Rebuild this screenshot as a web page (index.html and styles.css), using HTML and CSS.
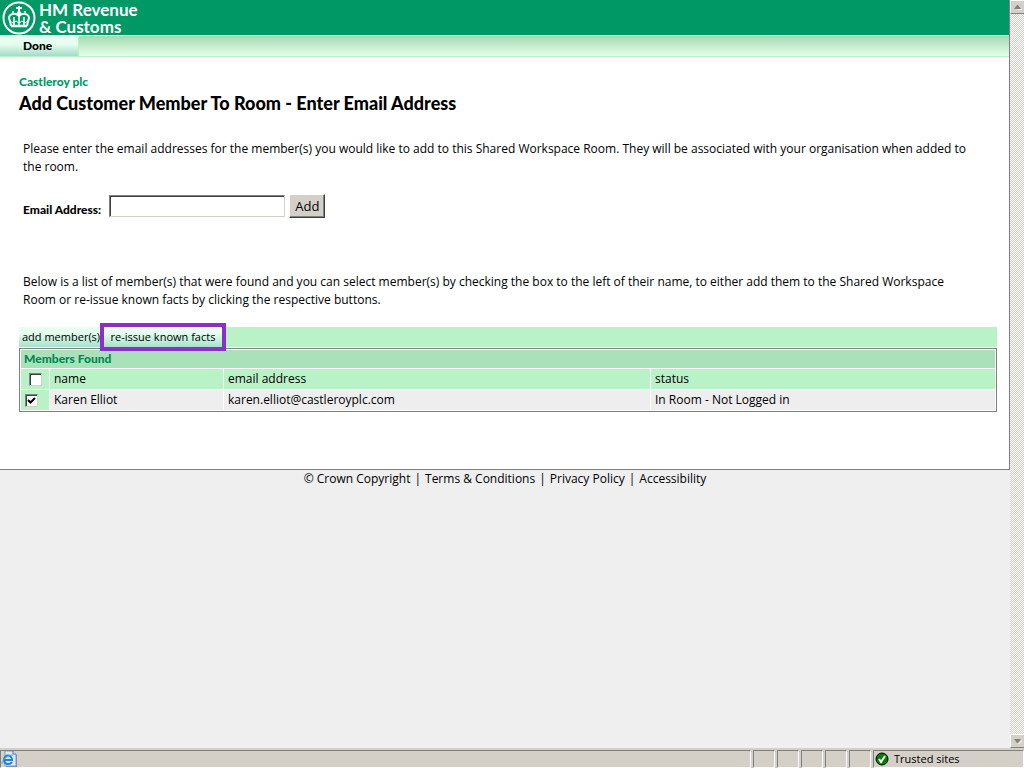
FILE: index.html
```html
<!DOCTYPE html>
<html lang="en">
<head>
  <meta charset="UTF-8" />
  <title>Add Customer Member To Room</title>
  <link rel="stylesheet" href="styles.css">
</head>
<body>
  <div class="viewport">
    <div class="page">
      <div class="panel">
        <header class="banner">
          <svg class="crest" width="34" height="34" viewBox="0 0 34 34" fill="none" stroke="#fff">
            <circle cx="17" cy="17" r="15.5" stroke-width="2" />
            <path d="M9 25 L8 20 C4 13 13 11 17 15 C21 11 30 13 26 20 L25 25" stroke-width="2" />
            <path d="M17 14 V24 M12 16 V24 M22 16 V24" stroke-width="1.5" />
            <path d="M8 20 L11 22 L14 20 L17 22 L20 20 L23 22 L26 20" />
            <path d="M9 25 H25" stroke-width="2.5" />
            <path d="M17 5 V11 M14 7 H20" stroke-width="2" />
            <circle cx="17" cy="12" r="2" fill="#fff" stroke="none" />
            <circle cx="11" cy="11" r="1" fill="#fff" stroke="none" />
            <circle cx="23" cy="11" r="1" fill="#fff" stroke="none" />
          </svg>
          <div class="brand"><div>HM Revenue</div><div>&amp; Customs</div></div>
        </header>
        <nav class="topnav">
          <a href="#" class="done">Done</a>
        </nav>

        <main class="content">
          <div class="company">Castleroy plc</div>
          <h1>Add Customer Member To Room - Enter Email Address</h1>
          <p class="intro">Please enter the email addresses for the member(s) you would like to add to this Shared Workspace Room. They will be associated with your organisation when added to the room.</p>

          <form class="email-form">
            <label for="email">Email Address:</label>
            <input type="text" id="email" name="email" />
            <button type="button" class="add-btn">Add</button>
          </form>

          <p class="help">Below is a list of member(s) that were found and you can select member(s) by checking the box to the left of their name, to either add them to the Shared Workspace Room or re-issue known facts by clicking the respective buttons.</p>

          <div class="toolbar">
            <button type="button" class="tool">add member(s)</button>
            <button type="button" class="tool selected">re-issue known facts</button>
          </div>
          <table class="members">
            <colgroup>
              <col class="col-check">
              <col class="col-name">
              <col class="col-email">
              <col>
            </colgroup>
            <thead>
              <tr class="title-row"><th colspan="4">Members Found</th></tr>
              <tr class="head-row">
                <th class="check center"><input type="checkbox" aria-label="Select all members" /></th>
                <th>name</th>
                <th>email address</th>
                <th>status</th>
              </tr>
            </thead>
            <tbody>
              <tr>
                <td class="check"><input type="checkbox" aria-label="Select Karen Elliot" checked /></td>
                <td>Karen Elliot</td>
                <td>karen.elliot@castleroyplc.com</td>
                <td>In Room - Not Logged in</td>
              </tr>
            </tbody>
          </table>
        </main>
      </div>

      <footer class="footer">
        <span>© Crown Copyright</span>
        <span>|</span>
        <a href="#">Terms &amp; Conditions</a>
        <span>|</span>
        <a href="#">Privacy Policy</a>
        <span>|</span>
        <a href="#">Accessibility</a>
      </footer>
    </div>

    <div class="scrollbar">
      <button type="button" class="arrow" aria-label="Scroll up">
        <svg width="8" height="5" viewBox="0 0 8 5"><path d="M1 5 H8 V4 Z" fill="#fff" /><path d="M0 4 L3 0 H4 L7 4 Z" fill="#808080" /></svg>
      </button>
      <button type="button" class="arrow" aria-label="Scroll down">
        <svg width="8" height="5" viewBox="0 0 8 5"><path d="M8 1 L4 5 L5 5 L8 2 Z" fill="#fff" /><path d="M0 0 H7 L4 4 H3 Z" fill="#808080" /></svg>
      </button>
    </div>
  </div>

  <div class="statusbar">
    <div class="pane main-pane">
      <svg width="17" height="16" viewBox="0 0 17 16">
        <path d="M5 1 H13 L16 4 V16 H5 Z" fill="#8580a0" />
        <path d="M4 0 H12 L15 3 V15 H4 Z" fill="#dce9fb" stroke="#7b9bd0" />
        <path d="M12 0 V3 H15" fill="#fff" stroke="#5068a8" />
        <path d="M3 9 H11 C11 3 3 3 3 9 C3 14 9 14 11 11" fill="none" stroke="#2380d8" stroke-width="2" />
        <path d="M1 13 C0 10 6 4 12 4" fill="none" stroke="#4aacec" />
      </svg>
    </div>
    <div class="pane"></div>
    <div class="pane"></div>
    <div class="pane"></div>
    <div class="pane"></div>
    <div class="pane"></div>
    <div class="pane zone">
      <svg width="14" height="14" viewBox="0 0 14 14">
        <circle cx="7" cy="7" r="6" fill="#008000" stroke="#000" />
        <path d="M4 7 L6 10 L10 4" fill="none" stroke="#fff" stroke-width="2" />
      </svg>
      <span>Trusted sites</span>
    </div>
  </div>
</body>
</html>
```
FILE: styles.css
```css
* {
  box-sizing: border-box;
}
body {
  margin: 0;
  height: 100vh;
  display: flex;
  flex-direction: column;
  font-family: 'Open Sans', sans-serif;
  font-size: 12px;
  line-height: 18px;
  color: #000;
  background-color: #efefef;
}
a {
  color: inherit;
  text-decoration: none;
}
button,
input {
  margin: 0;
  font-family: inherit;
  color: inherit;
}
.viewport {
  flex: 1;
  display: flex;
  min-height: 0;
}
.page {
  flex: 1;
  overflow: hidden;
}
.panel {
  background-color: #fff;
  border-right: 1px solid #808080;
  border-bottom: 1px solid #808080;
}

/* header */
.banner {
  display: flex;
  align-items: center;
  gap: 3px;
  height: 35px;
  padding-left: 2px;
  background-color: #009966;
}
.brand {
  color: #fff;
  font-family: 'Lato', sans-serif;
  font-size: 17px;
  font-weight: 700;
  line-height: 17px;
}
.topnav {
  display: flex;
  height: 22px;
  border-top: 1px solid #fff;
  border-bottom: 1px solid #baf2c8;
  background: linear-gradient(#a3dab0, #e6ffea);
}
.done {
  width: 79px;
  padding-left: 23px;
  font-family: 'Lato', sans-serif;
  font-weight: 900;
  line-height: 20px;
  border-right: 1px solid #baf2c8;
  background: linear-gradient(#e6fff0 40%, #a3dcc8);
}

/* content */
.content {
  padding: 16px 12px 57px 19px;
}
.company {
  font-family: 'Lato', sans-serif;
  font-weight: 900;
  color: #009966;
}
h1 {
  margin: 0 0 25px;
  font-family: 'Lato', sans-serif;
  font-size: 18px;
  line-height: 24px;
  font-weight: 900;
}
.intro,
.help {
  margin: 0;
  padding: 0 20px 0 4px;
}
.email-form {
  display: flex;
  align-items: center;
  padding: 17px 4px 54px;
}
.email-form label {
  padding-top: 8px;
  font-family: 'Lato', sans-serif;
  font-weight: 900;
}
.email-form input {
  width: 176px;
  height: 22px;
  margin: 0 4px 0 8px;
  padding: 1px 3px;
  background-color: #fff;
  border: 1px solid #808080;
  border-right-color: #d4d0c8;
  border-bottom-color: #d4d0c8;
  box-shadow: inset 1px 1px #404040;
}
.add-btn {
  height: 24px;
  padding: 0 5px;
  font-size: 13px;
  background-color: #d4d0c8;
  border: 1px solid #fff;
  border-right-color: #404040;
  border-bottom-color: #404040;
  box-shadow: inset -1px -1px #808080;
}

/* member list */
.toolbar {
  display: flex;
  gap: 4px;
  height: 20px;
  margin: 18px 0 1px;
  background-color: #baf2c8;
}
.tool {
  width: 81px;
  padding: 0 0 2px 3px;
  font-size: 11px;
  white-space: nowrap;
  border: none;
  background: linear-gradient(#e6fff0 30%, #a8e0cc);
}
.tool.selected {
  width: 118px;
  padding-left: 0;
  outline: 4px solid #8b2fc9;
}
.members {
  width: 100%;
  table-layout: fixed;
  border: 1px solid #808080;
  border-collapse: separate;
  border-spacing: 1px;
  background-color: #fff;
}
.col-check {
  width: 28px;
}
.col-name {
  width: 173px;
}
.col-email {
  width: 426px;
}
.members th,
.members td {
  height: 20px;
  padding: 0 4px;
  text-align: left;
  font-weight: 400;
  line-height: 18px;
  background-color: #eee;
}
.members .title-row th {
  height: 18px;
  padding: 0 3px;
  font-family: 'Lato', sans-serif;
  font-weight: 900;
  color: #008855;
  background-color: #a9e2b8;
}
.members .head-row th,
.members .check {
  background-color: #baf2c8;
}
.members .center {
  text-align: center;
}
.members input {
  appearance: none;
  display: inline-block;
  width: 13px;
  height: 13px;
  vertical-align: middle;
  background-color: #fff;
  border: 1px solid #808080;
  border-right-color: #d4d0c8;
  border-bottom-color: #d4d0c8;
  box-shadow: inset 1px 1px #404040;
}
.members input:checked {
  background-image: url("data:image/svg+xml,%3Csvg xmlns='http://www.w3.org/2000/svg' viewBox='0 0 11 11'%3E%3Cpath d='M2 5 L4.5 7.500 L9 3' fill='none' stroke='black' stroke-width='2'/%3E%3C/svg%3E");
}
.footer {
  display: flex;
  justify-content: center;
  gap: 4px;
}

/* browser chrome */
.scrollbar {
  display: flex;
  flex-direction: column;
  justify-content: space-between;
  width: 14px;
  background: repeating-conic-gradient(#d4d0c8 0 25%, #fff 0 50%) 0 0 / 2px 2px;
}
.arrow {
  display: flex;
  align-items: center;
  justify-content: center;
  height: 14px;
  padding: 0;
  background-color: #d4d0c8;
  border: 1px solid #fff;
  border-right: none;
  border-bottom-color: #808080;
}
.statusbar {
  display: flex;
  gap: 2px;
  height: 20px;
  padding-top: 2px;
  font-size: 11px;
  background-color: #d4d0c8;
}
.pane {
  display: flex;
  align-items: center;
  width: 22px;
  border: 1px solid #808080;
  border-right-color: #fff;
  border-bottom-color: #fff;
}
.main-pane {
  flex: 1;
}
.zone {
  width: 151px;
  gap: 5px;
  padding-left: 1px;
}
```
